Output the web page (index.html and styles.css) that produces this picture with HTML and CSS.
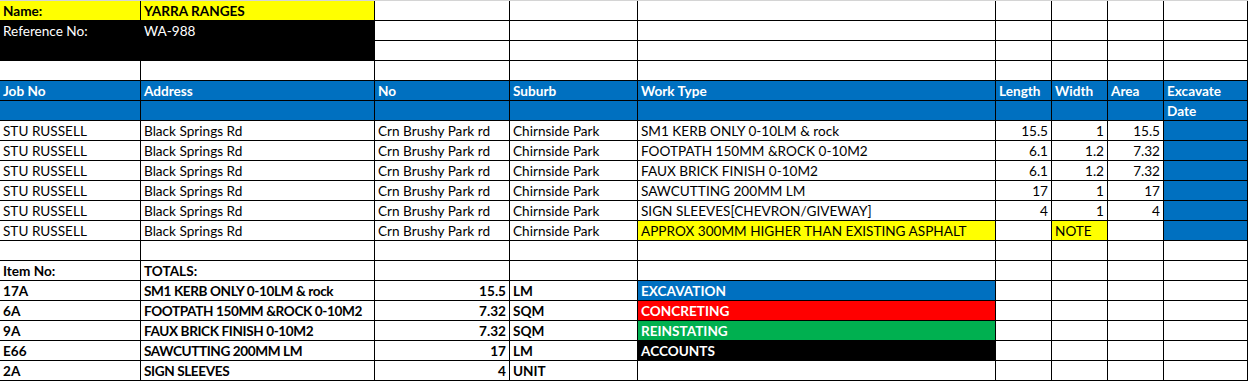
FILE: index.html
```html
<!DOCTYPE html>
<html>
<head>
<meta charset="utf-8">
<link rel="stylesheet" href="styles.css">
</head>
<body>
<div class="sheet">
  <!-- row 1 -->
  <div class="c yellow b">Name:</div><div class="c yellow b">YARRA RANGES</div><div class="c"></div><div class="c"></div><div class="c"></div><div class="c"></div><div class="c"></div><div class="c"></div><div class="c"></div>
  <!-- row 2 -->
  <div class="c black">Reference No:</div><div class="c black">WA-988</div><div class="c"></div><div class="c"></div><div class="c"></div><div class="c"></div><div class="c"></div><div class="c"></div><div class="c"></div>
  <!-- row 3 -->
  <div class="c black"></div><div class="c black"></div><div class="c"></div><div class="c"></div><div class="c"></div><div class="c"></div><div class="c"></div><div class="c"></div><div class="c"></div>
  <!-- row 4 -->
  <div class="c"></div><div class="c"></div><div class="c"></div><div class="c"></div><div class="c"></div><div class="c"></div><div class="c"></div><div class="c"></div><div class="c"></div>
  <!-- header -->
  <div class="c blue b">Job No</div><div class="c blue b">Address</div><div class="c blue b">No</div><div class="c blue b">Suburb</div><div class="c blue b">Work Type</div><div class="c blue b">Length</div><div class="c blue b">Width</div><div class="c blue b">Area</div><div class="c blue b">Excavate</div>
  <div class="c blue"></div><div class="c blue"></div><div class="c blue"></div><div class="c blue"></div><div class="c blue"></div><div class="c blue"></div><div class="c blue"></div><div class="c blue"></div><div class="c blue b">Date</div>
  <!-- data -->
  <div class="c">STU RUSSELL</div><div class="c">Black Springs Rd</div><div class="c">Crn Brushy Park rd</div><div class="c">Chirnside Park</div><div class="c">SM1 KERB ONLY 0-10LM &amp; rock</div><div class="c r">15.5</div><div class="c r">1</div><div class="c r">15.5</div><div class="c blue"></div>
  <div class="c">STU RUSSELL</div><div class="c">Black Springs Rd</div><div class="c">Crn Brushy Park rd</div><div class="c">Chirnside Park</div><div class="c">FOOTPATH 150MM &amp;ROCK 0-10M2</div><div class="c r">6.1</div><div class="c r">1.2</div><div class="c r">7.32</div><div class="c blue"></div>
  <div class="c">STU RUSSELL</div><div class="c">Black Springs Rd</div><div class="c">Crn Brushy Park rd</div><div class="c">Chirnside Park</div><div class="c">FAUX BRICK FINISH 0-10M2</div><div class="c r">6.1</div><div class="c r">1.2</div><div class="c r">7.32</div><div class="c blue"></div>
  <div class="c">STU RUSSELL</div><div class="c">Black Springs Rd</div><div class="c">Crn Brushy Park rd</div><div class="c">Chirnside Park</div><div class="c">SAWCUTTING 200MM LM</div><div class="c r">17</div><div class="c r">1</div><div class="c r">17</div><div class="c blue"></div>
  <div class="c">STU RUSSELL</div><div class="c">Black Springs Rd</div><div class="c">Crn Brushy Park rd</div><div class="c">Chirnside Park</div><div class="c">SIGN SLEEVES[CHEVRON/GIVEWAY]</div><div class="c r">4</div><div class="c r">1</div><div class="c r">4</div><div class="c blue"></div>
  <div class="c">STU RUSSELL</div><div class="c">Black Springs Rd</div><div class="c">Crn Brushy Park rd</div><div class="c">Chirnside Park</div><div class="c yellow">APPROX 300MM HIGHER THAN EXISTING ASPHALT</div><div class="c"></div><div class="c yellow">NOTE</div><div class="c"></div><div class="c blue"></div>
  <!-- empty -->
  <div class="c"></div><div class="c"></div><div class="c"></div><div class="c"></div><div class="c"></div><div class="c"></div><div class="c"></div><div class="c"></div><div class="c"></div>
  <!-- totals -->
  <div class="c b">Item No:</div><div class="c b">TOTALS:</div><div class="c"></div><div class="c"></div><div class="c"></div><div class="c"></div><div class="c"></div><div class="c"></div><div class="c"></div>
  <div class="c b">17A</div><div class="c b t">SM1 KERB ONLY 0-10LM &amp; rock</div><div class="c b r">15.5</div><div class="c b">LM</div><div class="c b blue">EXCAVATION</div><div class="c"></div><div class="c"></div><div class="c"></div><div class="c"></div>
  <div class="c b">6A</div><div class="c b t">FOOTPATH 150MM &amp;ROCK 0-10M2</div><div class="c b r">7.32</div><div class="c b">SQM</div><div class="c b red">CONCRETING</div><div class="c"></div><div class="c"></div><div class="c"></div><div class="c"></div>
  <div class="c b">9A</div><div class="c b t">FAUX BRICK FINISH 0-10M2</div><div class="c b r">7.32</div><div class="c b">SQM</div><div class="c b green">REINSTATING</div><div class="c"></div><div class="c"></div><div class="c"></div><div class="c"></div>
  <div class="c b">E66</div><div class="c b t">SAWCUTTING 200MM LM</div><div class="c b r">17</div><div class="c b">LM</div><div class="c b black">ACCOUNTS</div><div class="c"></div><div class="c"></div><div class="c"></div><div class="c"></div>
  <div class="c b">2A</div><div class="c b t">SIGN SLEEVES</div><div class="c b r">4</div><div class="c b">UNIT</div><div class="c"></div><div class="c"></div><div class="c"></div><div class="c"></div><div class="c"></div>
</div>
</body>
</html>
```
FILE: styles.css
```css
html, body {
  margin: 0;
  padding: 0;
  background: #ffffff;
}
.sheet {
  display: grid;
  grid-template-columns: 141px 234px 135px 128px 358px 56px 56px 56px 84px;
  grid-auto-rows: 20px;
  border-top: 1px solid #d4d4d4;
  font-family: Lato, "Open Sans", sans-serif;
  font-size: 13.6px;
  color: #000;
}
.c {
  box-sizing: border-box;
  border-right: 1px solid #000;
  border-bottom: 1px solid #000;
  padding: 2px 3px 0;
  line-height: 17px;
  white-space: nowrap;
  overflow: hidden;
}
.b { font-weight: bold; }
.t { letter-spacing: -0.4px; }
.r { text-align: right; }
.yellow { background: #ffff00; }
.black { background: #000; color: #fff; }
.blue { background: #0070c0; color: #fff; }
.red { background: #ff0000; color: #fff; }
.green { background: #00b050; color: #fff; }
```
